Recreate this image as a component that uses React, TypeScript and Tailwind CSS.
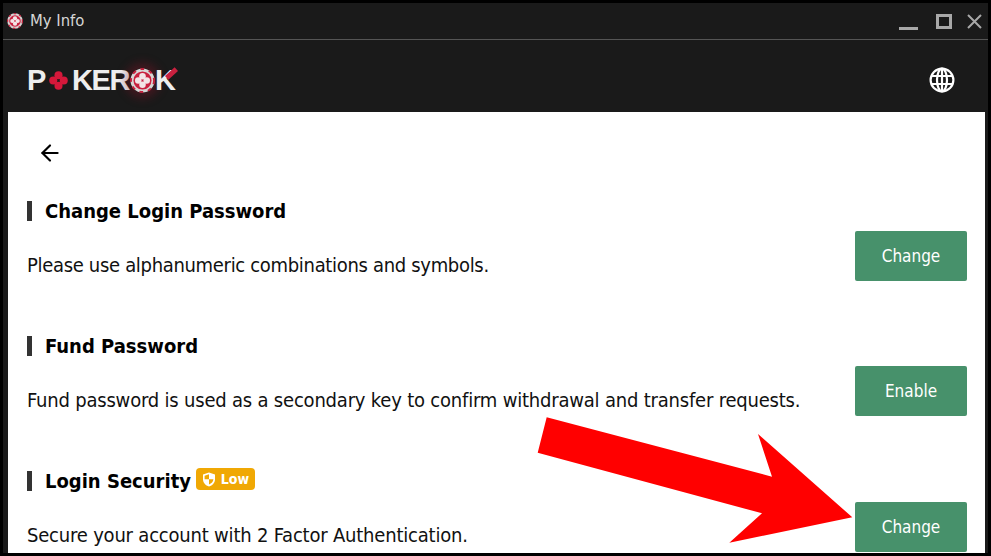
import React from 'react';
import { ArrowLeft } from 'lucide-react';

const Clover = ({ size = 16, color = '#d4183a' }: { size?: number; color?: string }) => (
  <svg width={size} height={size} viewBox="0 0 16 16">
    <circle cx="8" cy="3.6" r="3.4" fill={color} />
    <circle cx="8" cy="12.4" r="3.4" fill={color} />
    <circle cx="3.6" cy="8" r="3.4" fill={color} />
    <circle cx="12.4" cy="8" r="3.4" fill={color} />
  </svg>
);

const Chip = ({ size = 26 }: { size?: number }) => (
  <svg width={size} height={size} viewBox="0 0 26 26">
    <circle cx="13" cy="13" r="12.5" fill="#d9d5d5" />
    <circle cx="13" cy="13" r="12" fill="none" stroke="#c2203c" strokeWidth="2" strokeDasharray="4 5" />
    <circle cx="13" cy="13" r="9.4" fill="#c9213f" />
    <circle cx="13" cy="8.6" r="3.4" fill="#f3e4e6" />
    <circle cx="13" cy="17.4" r="3.4" fill="#f3e4e6" />
    <circle cx="8.6" cy="13" r="3.4" fill="#f3e4e6" />
    <circle cx="17.4" cy="13" r="3.4" fill="#f3e4e6" />
  </svg>
);

const Logo = () => (
  <div className="flex items-center font-['Liberation_Sans',sans-serif] font-bold text-[29px] leading-none text-[#eeeeee] h-[26px]">
    <span className="w-[22px]">P</span>
    <span className="mr-[4px]"><Clover size={19} /></span>
    <span className="w-[58px] tracking-[-1.4px]">KER</span>
    <span className="rounded-full shadow-[0_0_10px_5px_rgba(130,20,40,0.4)] flex"><Chip size={25} /></span>
    <span className="relative w-[26px]">
      K
      <span className="absolute right-[3px] top-[5px] w-[13px] h-[5px] bg-[#c9213f] -rotate-[42deg]" />
    </span>
  </div>
);

const Globe = () => (
  <svg width="26" height="26" viewBox="0 0 26 26" fill="none" stroke="#ffffff" strokeWidth="2.2">
    <circle cx="13" cy="13" r="11.4" />
    <ellipse cx="13" cy="13" rx="5" ry="11.4" />
    <path d="M2.5 9h21M2.5 17h21M13 2v22" />
  </svg>
);

const ShieldBadge = () => (
  <svg width="14" height="15" viewBox="0 0 14 15">
    <path d="M7 .5 13 2.6v4.6c0 3.5-2.5 6.1-6 7.3-3.5-1.2-6-3.8-6-7.3V2.6z" fill="#ffffff" />
    <path d="M7 2.2v5H2.6V3.7zM7 7.2h4.4c-.2 2.4-2 4.2-4.4 5.3z" fill="#f0a804" />
  </svg>
);

const Section = ({ title, badge, text, action, textClass = 'tracking-[-0.2px]' }: { title: string; badge?: boolean; text: string; action: string; textClass?: string }) => (
  <section className="flex justify-between items-end h-[85px] shrink-0 mb-[50px] last:[&>button]:mb-[-2px]">
    <div>
      <div className="flex items-center h-[30px]">
        <span className="w-[5px] h-[20px] bg-[#333333] mr-[13px]" />
        <h2 className="text-[20px] font-bold text-black leading-[30px]">{title}</h2>
        {badge && (
          <span className="ml-[5px] -mt-[4px] h-[22px] w-[59px] rounded-[4px] bg-[#f0a804] text-white text-[14px] font-bold flex items-center justify-center gap-[5px]">
            <ShieldBadge />
            Low
          </span>
        )}
      </div>
      <p className={`mt-[24px] text-[20px] leading-[30px] text-[#111111] whitespace-nowrap ${textClass}`}>{text}</p>
    </div>
    <button className="w-[112px] h-[50px] pt-[1px] rounded-[2px] bg-[#47916b] text-white text-[17px] mb-[-1px]">{action}</button>
  </section>
);

export default function App() {
  return (
    <div className="relative w-[991px] h-[556px] overflow-hidden bg-black p-[3px] font-['DejaVu_Sans_Condensed','DejaVu_Sans',sans-serif]">
      <div className="h-full flex flex-col bg-[#1a1a1a]">
        {/* Title bar */}
        <div className="h-[36px] shrink-0 flex items-center justify-between pl-[4px] pr-[6px]">
          <div className="flex items-center gap-[7px]">
            <span className="flex rounded-full"><Chip size={16} /></span>
            <span className="text-[#d6d6d6] text-[16.5px] leading-none">My Info</span>
          </div>
          <div className="flex items-center">
            <span className="block w-[19px] h-[3px] mt-[14px] mr-[18px] bg-[#a8a8a8]" />
            <span className="block w-[16px] h-[15px] mr-[15px] border-[3px] border-[#a8a8a8]" />
            <svg width="15" height="15" viewBox="0 0 15 15" stroke="#a8a8a8" strokeWidth="2" fill="none">
              <path d="M1 1l13 13M14 1 1 14" />
            </svg>
          </div>
        </div>
        <div className="h-[1px] shrink-0 bg-[#555555]" />
        {/* Header */}
        <header className="h-[72px] shrink-0 flex items-center justify-between pt-[8px] pl-[24px] pr-[33px]">
          <Logo />
          <Globe />
        </header>
        {/* Content */}
        <main className="flex-1 min-h-0 overflow-hidden bg-white ml-[5px] mr-[3px] pl-[19px] pr-[18px]">
          <div className="h-[83px] pt-[28px] pl-[10px]">
            <ArrowLeft size={26} strokeWidth={2} className="text-black" />
          </div>
          <Section title="Change Login Password" textClass="tracking-[-0.32px]" text="Please use alphanumeric combinations and symbols." action="Change" />
          <Section title="Fund Password" text="Fund password is used as a secondary key to confirm withdrawal and transfer requests." action="Enable" />
          <Section title="Login Security" badge text="Secure your account with 2 Factor Authentication." action="Change" />
        </main>
      </div>
      {/* Annotation arrow */}
      <svg className="absolute left-0 top-0 pointer-events-none" width="991" height="556" viewBox="0 0 991 556">
        <polygon points="546.7,417.3 772,476.7 758,434 852.3,517.3 729.3,542.7 762,513.3 537.7,452.7" fill="#ff0000" />
      </svg>
    </div>
  );
}
